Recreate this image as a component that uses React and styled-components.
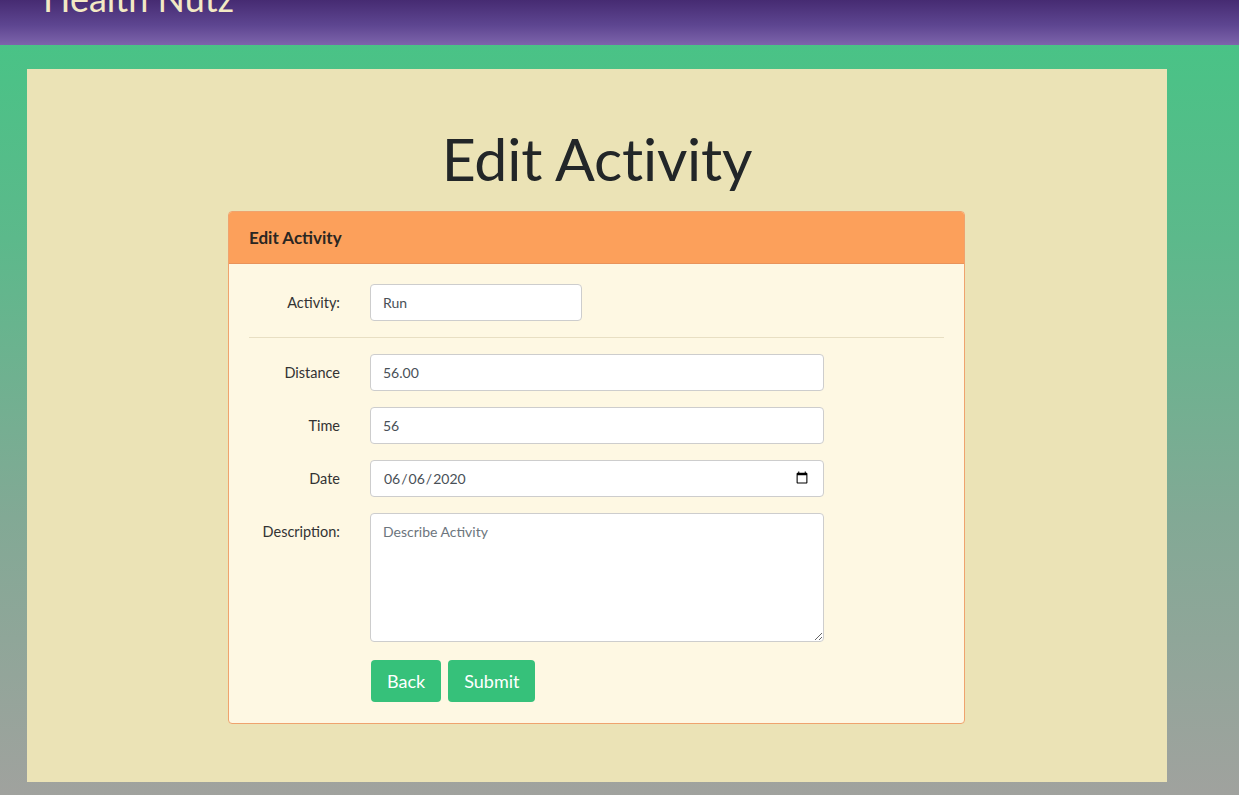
import React from 'react';
import styled, { createGlobalStyle } from 'styled-components';

const GlobalStyle = createGlobalStyle`
  html, body {
    margin: 0;
    padding: 0;
  }
  body {
    min-height: 100vh;
    font-family: Lato, "Open Sans", "Liberation Sans", sans-serif;
    background: linear-gradient(180deg, #45c585 0%, #5cb98b 30%, #82a995 65%, #a0a29e 100%);
    overflow: hidden;
  }
`;

const Navbar = styled.header`
  height: 45px;
  overflow: hidden;
  background: linear-gradient(180deg, #462b72 0%, #5d4590 55%, #7d64ab 100%);
  padding-left: 43px;
`;

const Brand = styled.h2`
  margin: -23px 0 0;
  font-size: 36px;
  font-weight: 400;
  line-height: 1.2;
  color: #f3e9c4;
`;

const Page = styled.main`
  width: 1140px;
  margin: 24px 0 0 27px;
  min-height: 713px;
  box-sizing: border-box;
  background: #ebe3b6;
  padding-top: 55px;
  display: flex;
  flex-direction: column;
  align-items: center;
`;

const Title = styled.h1`
  margin: 0 0 16px;
  font-size: 59px;
  font-weight: 400;
  line-height: 1.2;
  color: #222628;
  letter-spacing: -0.2px;
`;

const Card = styled.section`
  width: 737px;
  box-sizing: border-box;
  margin-right: 1px;
  border: 1px solid #efa36e;
  border-radius: 4px;
  background: #fef8e3;
  overflow: hidden;
`;

const CardHeader = styled.div`
  height: 52px;
  box-sizing: border-box;
  padding: 0 20px;
  display: flex;
  align-items: center;
  background: #fca05b;
  border-bottom: 1px solid #e9935a;
  font-size: 17px;
  font-weight: 700;
  color: #2a2622;
`;

const CardBody = styled.div`
  padding: 20px 20px 21px;
`;

const Row = styled.div`
  display: grid;
  grid-template-columns: 91px ${p => p.$width || 454}px;
  column-gap: 30px;
  align-items: ${p => (p.$top ? 'start' : 'center')};
  margin-bottom: 16px;
`;

const Label = styled.label`
  text-align: right;
  font-size: 14.5px;
  color: #333;
  padding-top: ${p => (p.$top ? '10px' : '0')};
`;

const fieldStyles = `
  box-sizing: border-box;
  width: 100%;
  border: 1px solid #cdcdcd;
  border-radius: 4px;
  background: #fff;
  font-family: Lato, "Open Sans", "Liberation Sans", sans-serif;
  font-size: 14px;
  color: #495057;
  padding: 0 12px;
  outline: none;
`;

const Input = styled.input`
  ${fieldStyles}
  height: 37px;
`;

const TextArea = styled.textarea`
  ${fieldStyles}
  height: 129px;
  padding: 9px 12px;
  resize: vertical;
  &::placeholder {
    color: #6c757d;
  }
`;

const Divider = styled.hr`
  border: 0;
  border-top: 1px solid #e8dfc3;
  margin: 0 0 16px;
`;

const Actions = styled.div`
  display: flex;
  gap: 7px;
  margin-left: 122px;
  padding-top: 2px;
`;

const Button = styled.button`
  height: 42px;
  padding: 0 16px;
  border: 0;
  border-radius: 4px;
  background: #36c17a;
  color: #fff;
  font-family: Lato, "Open Sans", "Liberation Sans", sans-serif;
  font-size: 18px;
  cursor: pointer;
`;

export default function App() {
  return (
    <>
      <GlobalStyle />
      <Navbar>
        <Brand>Health Nutz</Brand>
      </Navbar>
      <Page>
        <Title>Edit Activity</Title>
        <Card>
          <CardHeader>Edit Activity</CardHeader>
          <CardBody>
            <Row $width={212}>
              <Label>Activity:</Label>
              <Input defaultValue="Run" />
            </Row>
            <Divider />
            <Row>
              <Label>Distance</Label>
              <Input defaultValue="56.00" />
            </Row>
            <Row>
              <Label>Time</Label>
              <Input defaultValue="56" />
            </Row>
            <Row>
              <Label>Date</Label>
              <Input type="date" defaultValue="2020-06-06" />
            </Row>
            <Row $top>
              <Label $top>Description:</Label>
              <TextArea placeholder="Describe Activity" />
            </Row>
            <Actions>
              <Button>Back</Button>
              <Button>Submit</Button>
            </Actions>
          </CardBody>
        </Card>
      </Page>
    </>
  );
}
